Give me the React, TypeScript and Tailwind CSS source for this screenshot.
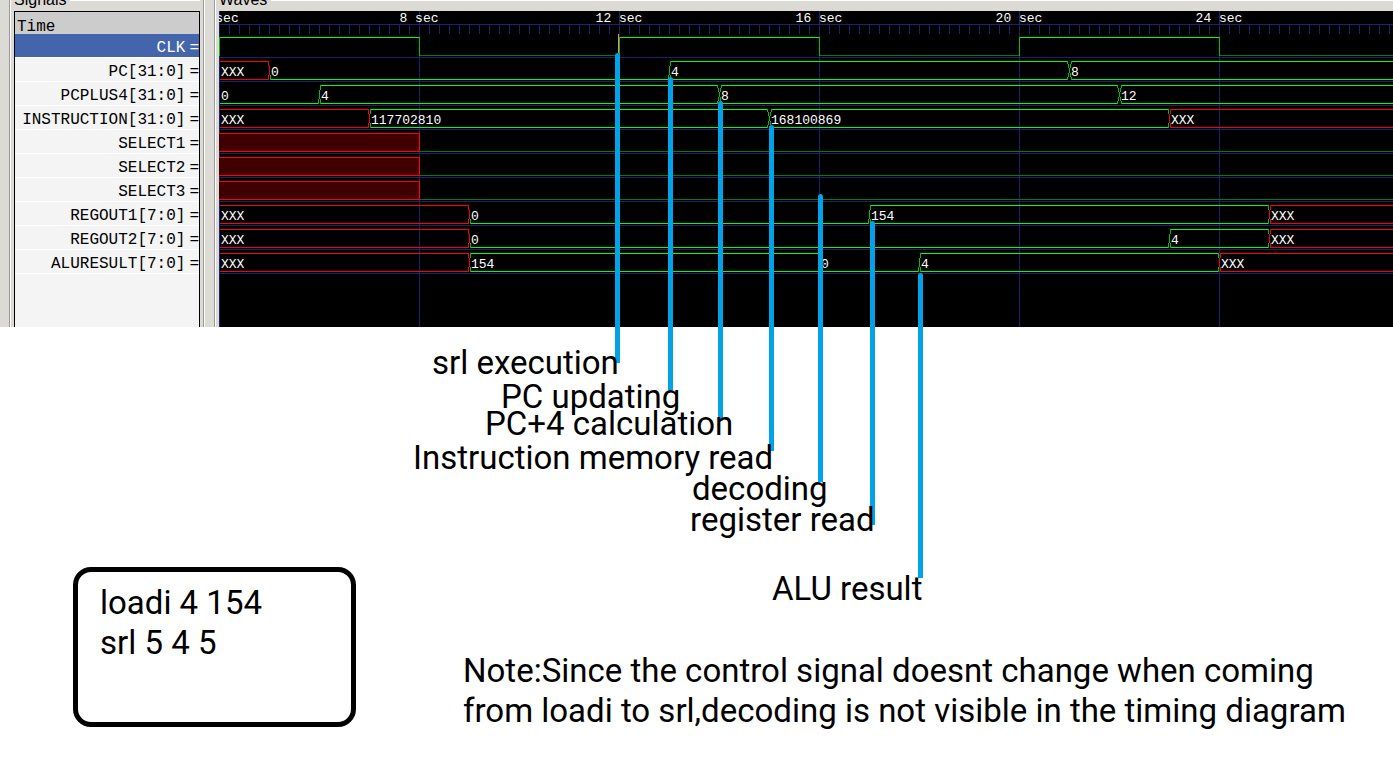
import React from "react";

const ROW_HEIGHT = 24;
const HEADER_HEIGHT = 22;

const BRIGHT = "#00ff00";
const EDGE = "#00c000";
const DIM = "#008000";
const RED = "#ff0000";
const GRID = "#202070";

type Change = { at: number; value: string };
type Signal =
  | { name: string; kind: "bus"; changes: Change[] }
  | { name: string; kind: "clock"; toggles: number[] }
  | { name: string; kind: "unknown"; until: number };

// Positions are pixels along the time axis: one second is 50 pixels.
const signals: Signal[] = [
  { name: "CLK", kind: "clock", toggles: [0, 200, 400, 600, 800, 1000] },
  {
    name: "PC[31:0]",
    kind: "bus",
    changes: [
      { at: 0, value: "XXX" },
      { at: 50, value: "0" },
      { at: 450, value: "4" },
      { at: 850, value: "8" },
    ],
  },
  {
    name: "PCPLUS4[31:0]",
    kind: "bus",
    changes: [
      { at: 0, value: "0" },
      { at: 100, value: "4" },
      { at: 500, value: "8" },
      { at: 900, value: "12" },
    ],
  },
  {
    name: "INSTRUCTION[31:0]",
    kind: "bus",
    changes: [
      { at: 0, value: "XXX" },
      { at: 150, value: "117702810" },
      { at: 550, value: "168100869" },
      { at: 950, value: "XXX" },
    ],
  },
  { name: "SELECT1", kind: "unknown", until: 200 },
  { name: "SELECT2", kind: "unknown", until: 200 },
  { name: "SELECT3", kind: "unknown", until: 200 },
  {
    name: "REGOUT1[7:0]",
    kind: "bus",
    changes: [
      { at: 0, value: "XXX" },
      { at: 250, value: "0" },
      { at: 650, value: "154" },
      { at: 1050, value: "XXX" },
    ],
  },
  {
    name: "REGOUT2[7:0]",
    kind: "bus",
    changes: [
      { at: 0, value: "XXX" },
      { at: 250, value: "0" },
      { at: 950, value: "4" },
      { at: 1050, value: "XXX" },
    ],
  },
  {
    name: "ALURESULT[7:0]",
    kind: "bus",
    changes: [
      { at: 0, value: "XXX" },
      { at: 250, value: "154" },
      { at: 600, value: "0" },
      { at: 700, value: "4" },
      { at: 1000, value: "XXX" },
    ],
  },
];

const marks = [
  { at: 0, label: "sec" },
  { at: 200, label: "8 sec" },
  { at: 400, label: "12 sec" },
  { at: 600, label: "16 sec" },
  { at: 800, label: "20 sec" },
  { at: 1000, label: "24 sec" },
];

const pointers = [
  { text: "srl execution", bar: "left-[615px] top-[53px] h-[310px]", label: "left-[432px] top-[343px]" },
  { text: "PC updating", bar: "left-[668px] top-[77px] h-[313px]", label: "left-[501px] top-[377px]" },
  { text: "PC+4 calculation", bar: "left-[718px] top-[101px] h-[320px]", label: "left-[485px] top-[404px]" },
  { text: "Instruction memory read", bar: "left-[769px] top-[125px] h-[326px]", label: "left-[413px] top-[438px]" },
  { text: "decoding", bar: "left-[818px] top-[194px] h-[288px]", label: "left-[692px] top-[469px]" },
  { text: "register read", bar: "left-[870px] top-[221px] h-[304px]", label: "left-[690px] top-[500px]" },
  { text: "ALU result", bar: "left-[918px] top-[273px] h-[305px]", label: "left-[772px] top-[569px]" },
];

function HLine({ x1, x2, y, color }: { x1: number; x2: number | null; y: number; color: string }) {
  return <rect x={x1} y={y} width={x2 === null ? "100%" : x2 - x1} height={1} fill={color} />;
}

function VLine({ x, y1, y2, color }: { x: number; y1: number; y2: number; color: string }) {
  return <rect x={x} y={y1} width={1} height={y2 - y1} fill={color} />;
}

function BusTransition({ x, high, from, to }: { x: number; high: number; from: string; to: string }) {
  const low = high + 18;
  if (from === "XXX" || to === "XXX") {
    const left = from === "XXX" ? RED : EDGE;
    const right = to === "XXX" ? RED : EDGE;
    return (
      <>
        {from !== "0" && <VLine x={x - 1} y1={high} y2={high + 5} color={left} />}
        <VLine x={x - 1} y1={high + 14} y2={low + 1} color={left} />
        <VLine x={x} y1={high + 5} y2={high + 14} color={RED} />
        {to !== "0" && <VLine x={x + 1} y1={high} y2={high + 5} color={right} />}
        <VLine x={x + 1} y1={high + 14} y2={low + 1} color={right} />
      </>
    );
  }
  if (from === "0" || to === "0") {
    return (
      <>
        <VLine x={from === "0" ? x + 1 : x - 1} y1={high} y2={high + 5} color={EDGE} />
        <VLine x={x} y1={high + 5} y2={high + 14} color={EDGE} />
        <VLine x={x - 1} y1={high + 14} y2={low + 1} color={EDGE} />
        <VLine x={x + 1} y1={high + 14} y2={low + 1} color={EDGE} />
      </>
    );
  }
  return (
    <>
      {[-1, 1].map((side) => (
        <g key={side}>
          <VLine x={x + 2 * side} y1={high} y2={high + 3} color={EDGE} />
          <VLine x={x + side} y1={high + 3} y2={high + 7} color={EDGE} />
          <VLine x={x + side} y1={high + 12} y2={high + 16} color={EDGE} />
          <VLine x={x + 2 * side} y1={high + 16} y2={low + 1} color={EDGE} />
        </g>
      ))}
      <VLine x={x} y1={high + 7} y2={high + 12} color={EDGE} />
    </>
  );
}

function BusTrace({ changes, high }: { changes: Change[]; high: number }) {
  return (
    <>
      {changes.map((change, i) => {
        const next = changes[i + 1];
        const color = change.value === "XXX" ? RED : BRIGHT;
        const start = i === 0 ? 1 : change.at + 2;
        const end = next ? next.at - 1 : null;
        return (
          <g key={change.at}>
            {change.value !== "0" && <HLine x1={start} x2={end} y={high} color={color} />}
            <HLine x1={start} x2={end} y={high + 18} color={color} />
            {i > 0 && <BusTransition x={change.at} high={high} from={changes[i - 1].value} to={change.value} />}
            <text x={change.at + 2} y={high + 15} fill="#ffffff">
              {change.value}
            </text>
          </g>
        );
      })}
    </>
  );
}

function ClockTrace({ toggles, high }: { toggles: number[]; high: number }) {
  return (
    <>
      {toggles.map((at, i) => {
        const up = i % 2 === 0;
        const end = i + 1 < toggles.length ? toggles[i + 1] : null;
        return (
          <g key={at}>
            <HLine x1={at} x2={end} y={up ? high : high + 18} color={up ? BRIGHT : DIM} />
            <VLine x={at} y1={high} y2={high + 19} color={EDGE} />
          </g>
        );
      })}
    </>
  );
}

function UnknownTrace({ until, high }: { until: number; high: number }) {
  return (
    <>
      <rect x={0} y={high} width={until} height={19} fill="#400000" />
      <HLine x1={0} x2={until} y={high} color={RED} />
      <HLine x1={0} x2={until} y={high + 18} color={RED} />
      <HLine x1={until} x2={null} y={high + 18} color={DIM} />
      <VLine x={until} y1={high} y2={high + 19} color={RED} />
    </>
  );
}

function Waveforms() {
  return (
    <svg
      className="block h-[316px] w-full bg-black font-['Liberation_Mono',monospace] text-[13px]"
      role="img"
      aria-label="Signal waveforms"
    >
      <defs>
        <pattern id="ticks" width={10} height={9} patternUnits="userSpaceOnUse" y={14}>
          <rect width={1} height={9} fill={GRID} />
        </pattern>
      </defs>
      <rect x={0} y={14} width="100%" height={9} fill="url(#ticks)" />
      <HLine x1={0} x2={null} y={13} color={GRID} />
      {marks.map((m) => (
        <VLine key={m.at} x={m.at} y1={0} y2={316} color={GRID} />
      ))}
      {signals.map((s, i) => (
        <HLine key={s.name} x1={0} x2={null} y={HEADER_HEIGHT + ROW_HEIGHT * (i + 1)} color={GRID} />
      ))}
      {marks.map((m) => (
        <text key={m.at} x={m.at === 0 ? 8 : m.at} y={11} fill="#ffffff" textAnchor="middle">
          {m.label}
        </text>
      ))}
      {signals.map((s, i) => {
        const high = HEADER_HEIGHT + ROW_HEIGHT * (i + 1) - 20;
        if (s.kind === "clock") return <ClockTrace key={s.name} toggles={s.toggles} high={high} />;
        if (s.kind === "unknown") return <UnknownTrace key={s.name} until={s.until} high={high} />;
        return <BusTrace key={s.name} changes={s.changes} high={high} />;
      })}
      <VLine x={399} y1={23} y2={42} color="#ff8080" />
    </svg>
  );
}

function FrameTitle({ children }: { children: string }) {
  return (
    <h2 className="flex h-[11px] items-end overflow-hidden font-['Liberation_Sans',sans-serif] text-base leading-4 text-black">
      <span className="mb-[3px] bg-[#dcdad5] pr-1">{children}</span>
      <span className="h-[11px] flex-1 border-t border-white" />
    </h2>
  );
}

export default function App() {
  return (
    <main className="relative min-h-screen overflow-hidden bg-white text-black">
      <div className="flex h-[327px] bg-[#dcdad5]">
        <section className="ml-[9px] w-[195px] shrink-0 border-x border-l-[#9c9a94] border-r-[#9c9a94]">
          <div className="h-full border-l border-white pr-[3px] pl-[3px]">
            <FrameTitle>Signals</FrameTitle>
            <div className="h-[316px] border-x border-t border-black bg-[#f4f4f4] font-['Liberation_Mono',monospace] text-base">
              <div className="flex h-[22px] items-end bg-[#cccccc] pl-[2px] leading-[14px]">Time</div>
              <ul>
                {signals.map((s, i) => (
                  <li
                    key={s.name}
                    className={
                      i === 0
                        ? "flex h-6 items-end justify-end border-b border-white bg-[#4464ac] leading-[18px] text-white"
                        : "flex h-6 items-end justify-end border-b border-white leading-[18px]"
                    }
                  >
                    <span className="mr-1">{s.name}</span>
                    <span>=</span>
                  </li>
                ))}
              </ul>
            </div>
          </div>
        </section>
        <div className="w-[10px] shrink-0 border-l border-white" />
        <section className="min-w-0 flex-1 border-l border-[#9c9a94]">
          <div className="h-full border-l border-white pl-[3px]">
            <FrameTitle>Waves</FrameTitle>
            <Waveforms />
          </div>
        </section>
      </div>

      <div className="font-['Roboto',sans-serif] text-[33px] leading-10 font-[450]">
        {pointers.map((p) => (
          <span key={p.text} className={`absolute w-[5px] rounded-t-sm bg-[#00a2e8] ${p.bar}`} />
        ))}
        {pointers.map((p) => (
          <p key={p.text} className={`absolute whitespace-nowrap ${p.label}`}>
            {p.text}
          </p>
        ))}

        <div className="mt-60 flex items-start pb-10 pl-[73px]">
          <div className="h-40 w-[283px] shrink-0 rounded-[18px] border-[5px] border-black px-[22px] pt-[11px]">
            <p>loadi 4 154</p>
            <p>srl 5 4 5</p>
          </div>
          <p className="mt-[84px] ml-[107px] whitespace-nowrap">
            Note:Since the control signal doesnt change when coming
            <br />
            from loadi to srl,decoding is not visible in the timing diagram
          </p>
        </div>
      </div>
    </main>
  );
}
